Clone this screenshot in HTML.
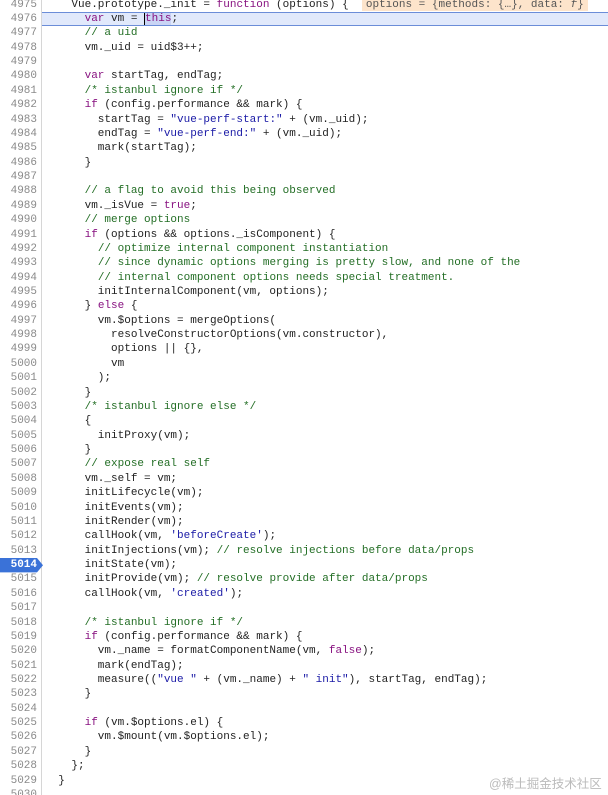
<!DOCTYPE html>
<html><head><meta charset="utf-8"><style>
html,body{margin:0;padding:0;background:#fff;width:608px;height:795px;overflow:hidden;position:relative}
#w{position:absolute;left:0;top:1.5px;width:608px;height:800px}
.l{position:absolute;left:0;width:608px;height:14.37px;font:11px/14.37px "Liberation Mono",monospace;white-space:pre;color:#222}
.n{position:absolute;left:0;width:37px;text-align:right;color:#8a8a8a}
.c{position:absolute;left:45px}
.gut{position:absolute;left:41px;top:0;width:1px;height:795px;background:#d6d6d6}
.k{color:#881280}.m{color:#236e25}.s{color:#1a1aa6}
.hl{background:#e1e9fb;border-top:1px solid #6b8dd8;border-bottom:1px solid #6b8dd8;box-sizing:border-box}
.pop{background:#fde4cb;color:#555;padding:0 4px}
.wm{position:absolute;left:489px;top:773px;font:12.5px "Liberation Sans","Noto Sans CJK SC",sans-serif;color:#bbb}
</style></head><body>
<div class="gut"></div>
<div id="w">
<div class="l" style="top:-3.9px"><span class="n">4975</span><span class="c">    Vue.prototype._init = <span class="k">function</span> (options) {  <span class="pop">options = {methods: {…}, data: <i>f</i>}</span></span></div>
<div class="l hl" style="top:10.47px;left:42px;width:566px"></div>
<div class="l" style="top:10.47px"><span class="n">4976</span><span class="c">      <span class="k">var</span> vm = <span class="k" style="background:#c9d4f5;border-left:1px solid #000">this</span>;</span></div>
<div class="l" style="top:24.84px"><span class="n">4977</span><span class="c">      <span class="m">// a uid</span></span></div>
<div class="l" style="top:39.21px"><span class="n">4978</span><span class="c">      vm._uid = uid$3++;</span></div>
<div class="l" style="top:53.58px"><span class="n">4979</span></div>
<div class="l" style="top:67.95px"><span class="n">4980</span><span class="c">      <span class="k">var</span> startTag, endTag;</span></div>
<div class="l" style="top:82.32px"><span class="n">4981</span><span class="c">      <span class="m">/* istanbul ignore if */</span></span></div>
<div class="l" style="top:96.69px"><span class="n">4982</span><span class="c">      <span class="k">if</span> (config.performance &amp;&amp; mark) {</span></div>
<div class="l" style="top:111.06px"><span class="n">4983</span><span class="c">        startTag = <span class="s">"vue-perf-start:"</span> + (vm._uid);</span></div>
<div class="l" style="top:125.43px"><span class="n">4984</span><span class="c">        endTag = <span class="s">"vue-perf-end:"</span> + (vm._uid);</span></div>
<div class="l" style="top:139.8px"><span class="n">4985</span><span class="c">        mark(startTag);</span></div>
<div class="l" style="top:154.17px"><span class="n">4986</span><span class="c">      }</span></div>
<div class="l" style="top:168.54px"><span class="n">4987</span></div>
<div class="l" style="top:182.91px"><span class="n">4988</span><span class="c">      <span class="m">// a flag to avoid this being observed</span></span></div>
<div class="l" style="top:197.28px"><span class="n">4989</span><span class="c">      vm._isVue = <span class="k">true</span>;</span></div>
<div class="l" style="top:211.65px"><span class="n">4990</span><span class="c">      <span class="m">// merge options</span></span></div>
<div class="l" style="top:226.02px"><span class="n">4991</span><span class="c">      <span class="k">if</span> (options &amp;&amp; options._isComponent) {</span></div>
<div class="l" style="top:240.39px"><span class="n">4992</span><span class="c">        <span class="m">// optimize internal component instantiation</span></span></div>
<div class="l" style="top:254.76px"><span class="n">4993</span><span class="c">        <span class="m">// since dynamic options merging is pretty slow, and none of the</span></span></div>
<div class="l" style="top:269.13px"><span class="n">4994</span><span class="c">        <span class="m">// internal component options needs special treatment.</span></span></div>
<div class="l" style="top:283.5px"><span class="n">4995</span><span class="c">        initInternalComponent(vm, options);</span></div>
<div class="l" style="top:297.87px"><span class="n">4996</span><span class="c">      } <span class="k">else</span> {</span></div>
<div class="l" style="top:312.24px"><span class="n">4997</span><span class="c">        vm.$options = mergeOptions(</span></div>
<div class="l" style="top:326.61px"><span class="n">4998</span><span class="c">          resolveConstructorOptions(vm.constructor),</span></div>
<div class="l" style="top:340.98px"><span class="n">4999</span><span class="c">          options || {},</span></div>
<div class="l" style="top:355.35px"><span class="n">5000</span><span class="c">          vm</span></div>
<div class="l" style="top:369.72px"><span class="n">5001</span><span class="c">        );</span></div>
<div class="l" style="top:384.09px"><span class="n">5002</span><span class="c">      }</span></div>
<div class="l" style="top:398.46px"><span class="n">5003</span><span class="c">      <span class="m">/* istanbul ignore else */</span></span></div>
<div class="l" style="top:412.83px"><span class="n">5004</span><span class="c">      {</span></div>
<div class="l" style="top:427.2px"><span class="n">5005</span><span class="c">        initProxy(vm);</span></div>
<div class="l" style="top:441.57px"><span class="n">5006</span><span class="c">      }</span></div>
<div class="l" style="top:455.94px"><span class="n">5007</span><span class="c">      <span class="m">// expose real self</span></span></div>
<div class="l" style="top:470.31px"><span class="n">5008</span><span class="c">      vm._self = vm;</span></div>
<div class="l" style="top:484.68px"><span class="n">5009</span><span class="c">      initLifecycle(vm);</span></div>
<div class="l" style="top:499.05px"><span class="n">5010</span><span class="c">      initEvents(vm);</span></div>
<div class="l" style="top:513.42px"><span class="n">5011</span><span class="c">      initRender(vm);</span></div>
<div class="l" style="top:527.79px"><span class="n">5012</span><span class="c">      callHook(vm, <span class="s">'beforeCreate'</span>);</span></div>
<div class="l" style="top:542.16px"><span class="n">5013</span><span class="c">      initInjections(vm); <span class="m">// resolve injections before data/props</span></span></div>
<div class="l" style="top:556.53px"><svg style="position:absolute;left:0;top:0" width="44" height="15"><path d="M0 0H37L43 7.2L37 14.4H0Z" fill="#3a72d8"/></svg><span class="n" style="color:#fff;font-weight:bold">5014</span><span class="c">      initState(vm);</span></div>
<div class="l" style="top:570.9px"><span class="n">5015</span><span class="c">      initProvide(vm); <span class="m">// resolve provide after data/props</span></span></div>
<div class="l" style="top:585.27px"><span class="n">5016</span><span class="c">      callHook(vm, <span class="s">'created'</span>);</span></div>
<div class="l" style="top:599.64px"><span class="n">5017</span></div>
<div class="l" style="top:614.01px"><span class="n">5018</span><span class="c">      <span class="m">/* istanbul ignore if */</span></span></div>
<div class="l" style="top:628.38px"><span class="n">5019</span><span class="c">      <span class="k">if</span> (config.performance &amp;&amp; mark) {</span></div>
<div class="l" style="top:642.75px"><span class="n">5020</span><span class="c">        vm._name = formatComponentName(vm, <span class="k">false</span>);</span></div>
<div class="l" style="top:657.12px"><span class="n">5021</span><span class="c">        mark(endTag);</span></div>
<div class="l" style="top:671.49px"><span class="n">5022</span><span class="c">        measure((<span class="s">"vue "</span> + (vm._name) + <span class="s">" init"</span>), startTag, endTag);</span></div>
<div class="l" style="top:685.86px"><span class="n">5023</span><span class="c">      }</span></div>
<div class="l" style="top:700.23px"><span class="n">5024</span></div>
<div class="l" style="top:714.6px"><span class="n">5025</span><span class="c">      <span class="k">if</span> (vm.$options.el) {</span></div>
<div class="l" style="top:728.97px"><span class="n">5026</span><span class="c">        vm.$mount(vm.$options.el);</span></div>
<div class="l" style="top:743.34px"><span class="n">5027</span><span class="c">      }</span></div>
<div class="l" style="top:757.71px"><span class="n">5028</span><span class="c">    };</span></div>
<div class="l" style="top:772.08px"><span class="n">5029</span><span class="c">  }</span></div>
<div class="l" style="top:786.45px"><span class="n">5030</span></div>
</div>
<div class="wm">@稀土掘金技术社区</div>
</body></html>
